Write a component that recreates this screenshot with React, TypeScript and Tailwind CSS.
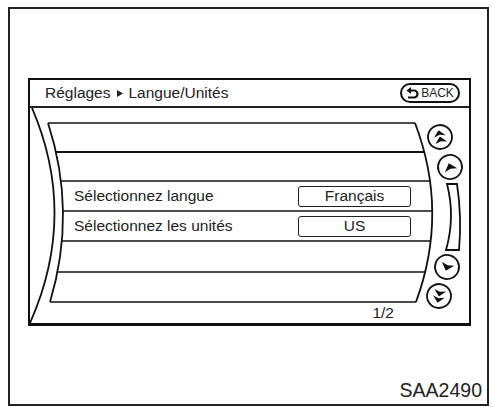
import React from 'react';

const FONT = { fontFamily: '"Liberation Sans", Arial, sans-serif' };

// quadratic bezier helper, used to end the row lines on the curved edges
const qx = (t: number, a: number, c: number, b: number) =>
  (1 - t) * (1 - t) * a + 2 * t * (1 - t) * c + t * t * b;

const lineYs = [44, 73, 103, 133, 164];

const Arrow = ({ x, y, rot, double }: { x: number; y: number; rot: number; double?: boolean }) => (
  <g transform={`translate(${x} ${y}) rotate(${rot})`}>
    <circle r="12" fill="white" stroke="#111" strokeWidth="1.8" />
    {double ? (
      <>
        <polygon points="-6,-0.5 0,-7 6,-0.5 0,-2.2" fill="#111" />
        <polygon points="-6,6 0,-0.5 6,6 0,4.3" fill="#111" />
      </>
    ) : (
      <polygon points="-6.5,3.5 0,-4 6.5,3.5 0,1.8" fill="#111" />
    )}
  </g>
);

const ListFrame = () => (
  <svg className="absolute inset-0" width="439" height="215" viewBox="0 0 439 215">
    <g fill="none" stroke="#111">
      <path d="M2,0 Q48,107 0,215" strokeWidth="1.8" />
      <path d="M18,15 Q47,104 20,194" strokeWidth="1.8" />
      <path d="M385,15 Q419,104 386,194" strokeWidth="1.8" />
      <line x1="18" y1="15" x2="385" y2="15" strokeWidth="1.6" />
      <line x1="20" y1="194" x2="386" y2="194" strokeWidth="1.6" />
      {lineYs.map((y, i) => {
        const t = (y - 15) / 179;
        return (
          <line
            key={y}
            x1={qx(t, 18, 47, 20)}
            y1={y}
            x2={qx(t, 385, 419, 386)}
            y2={y}
            strokeWidth={i === 0 ? 2 : 1.4}
          />
        );
      })}
    </g>
    <Arrow x={410} y={29} rot={-12} double />
    <Arrow x={420} y={59} rot={-18} />
    <path d="M417,76 L427,76 Q432,109 429,142 L416,142 Q425.5,109 417,76 Z" fill="white" stroke="#111" strokeWidth="1.8" />
    <Arrow x={417} y={159} rot={198} />
    <Arrow x={409} y={188} rot={192} double />
  </svg>
);

const ValueBox = ({ children }: { children: React.ReactNode }) => (
  <div className="ml-auto mr-[58px] w-[113px] h-[21px] border-[1.5px] border-[#222] rounded-[3px] flex items-center justify-center text-[15.5px] text-[#222] leading-none">
    {children}
  </div>
);

export default function App() {
  return (
    <div className="w-[492px] h-[407px] bg-white pl-[8px] pt-[7px]" style={FONT}>
      <div className="w-[481px] h-[399px] border-2 border-[#222] flex flex-col">
        <div className="ml-[18px] mt-[69px] w-[443px] h-[248px] border-2 border-b-[3px] border-[#111] flex flex-col">
          <div className="h-[28px] border-b-2 border-[#222] flex items-center pl-[15px] pr-[9px]">
            <div className="flex items-center text-[15.5px] text-[#222] leading-none">
              <span>Réglages</span>
              <svg className="mx-[6px]" width="6" height="7" viewBox="0 0 6 7">
                <polygon points="0,0 6,3.5 0,7" fill="#222" />
              </svg>
              <span>Langue/Unités</span>
            </div>
            <div className="ml-auto w-[60px] h-[20px] border-2 border-[#111] rounded-full flex items-center justify-center gap-[2px] text-[12px] text-[#222] leading-none">
              <svg width="13" height="12" viewBox="0 0 13 12">
                <polygon points="0.5,3.5 5,0 5,7" fill="#111" />
                <path d="M4,3.5 H8 a3.5 3.5 0 0 1 0 7 H2" fill="none" stroke="#111" strokeWidth="2.2" />
              </svg>
              <span>BACK</span>
            </div>
          </div>
          <div className="relative h-[215px] flex flex-col pt-[15px]">
            <ListFrame />
            <div className="h-[29px]" />
            <div className="h-[29px]" />
            <div className="relative h-[30px] flex items-center pl-[44px] text-[15.5px] text-[#222]">
              <span>Sélectionnez langue</span>
              <ValueBox>Français</ValueBox>
            </div>
            <div className="relative h-[30px] flex items-center pl-[44px] text-[15.5px] text-[#222]">
              <span>Sélectionnez les unités</span>
              <ValueBox>US</ValueBox>
            </div>
            <div className="h-[31px]" />
            <div className="h-[30px]" />
            <div className="relative h-[21px] flex items-center justify-end pr-[75px] text-[15.5px] text-[#222] leading-none">
              1/2
            </div>
          </div>
        </div>
        <div className="flex-1 flex items-end justify-end pr-[5px] pb-[4px] text-[19.5px] text-[#222] leading-none">
          SAA2490
        </div>
      </div>
    </div>
  );
}
